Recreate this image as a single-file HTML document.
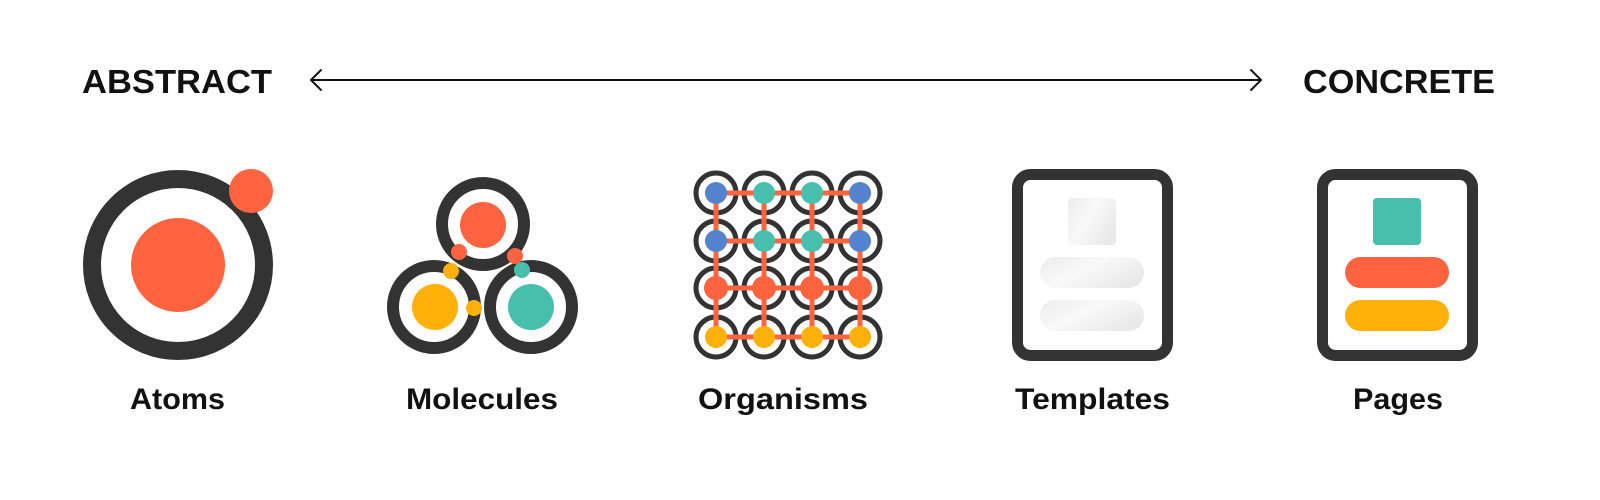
<!DOCTYPE html>
<html><head><meta charset="utf-8"><style>html,body{margin:0;padding:0;background:#fff}svg{display:block}</style></head>
<body>
<svg width="1600" height="500" viewBox="0 0 1600 500" xmlns="http://www.w3.org/2000/svg" font-family="Liberation Sans, Arial, sans-serif" font-weight="bold">
<defs>
<linearGradient id="g" x1="0" y1="0" x2="1" y2="0.6">
<stop offset="0" stop-color="#ececec"/><stop offset="0.5" stop-color="#f9f9f9"/><stop offset="1" stop-color="#e9e9e9"/>
</linearGradient>
</defs>
<text x="82" y="93" font-size="33" textLength="190" lengthAdjust="spacingAndGlyphs" fill="#111">ABSTRACT</text>
<text x="1303" y="93" font-size="33" textLength="192" lengthAdjust="spacingAndGlyphs" fill="#111">CONCRETE</text>
<g stroke="#111" stroke-width="2" fill="none" stroke-linecap="round" stroke-linejoin="round">
<line x1="311" y1="80" x2="1261" y2="80"/>
<polyline points="321,70 311,80 321,90"/>
<polyline points="1251,70 1261,80 1251,90"/>
</g>
<!-- Atoms -->
<circle cx="178" cy="265" r="86" fill="none" stroke="#333" stroke-width="18"/>
<circle cx="178" cy="265" r="47" fill="#ff6340"/>
<circle cx="251" cy="191" r="22" fill="#ff6340"/>
<!-- Molecules -->
<g fill="none" stroke="#333" stroke-width="12">
<circle cx="483" cy="224" r="41"/>
<circle cx="434" cy="307" r="41"/>
<circle cx="531" cy="307" r="41"/>
</g>
<circle cx="483" cy="225" r="23" fill="#ff6340"/>
<circle cx="435" cy="307" r="23" fill="#ffb10a"/>
<circle cx="531" cy="307" r="23" fill="#48bfad"/>
<circle cx="459" cy="252" r="8" fill="#ff6340"/>
<circle cx="451" cy="271" r="8" fill="#ffb10a"/>
<circle cx="515" cy="256" r="8" fill="#ff6340"/>
<circle cx="522" cy="270" r="8" fill="#48bfad"/>
<circle cx="474" cy="308" r="8" fill="#ffb10a"/>
<!-- Organisms -->
<g fill="none" stroke="#333" stroke-width="5">
<circle cx="716" cy="193" r="20"/><circle cx="764" cy="193" r="20"/><circle cx="812" cy="193" r="20"/><circle cx="860" cy="193" r="20"/>
<circle cx="716" cy="241" r="20"/><circle cx="764" cy="241" r="20"/><circle cx="812" cy="241" r="20"/><circle cx="860" cy="241" r="20"/>
<circle cx="716" cy="288" r="20"/><circle cx="764" cy="288" r="20"/><circle cx="812" cy="288" r="20"/><circle cx="860" cy="288" r="20"/>
<circle cx="716" cy="337" r="20"/><circle cx="764" cy="337" r="20"/><circle cx="812" cy="337" r="20"/><circle cx="860" cy="337" r="20"/>
</g>
<g stroke="#ff6340" stroke-width="5">
<line x1="716" y1="193" x2="860" y2="193"/><line x1="716" y1="241" x2="860" y2="241"/>
<line x1="716" y1="288" x2="860" y2="288"/><line x1="716" y1="337" x2="860" y2="337"/>
<line x1="716" y1="193" x2="716" y2="337"/><line x1="764" y1="193" x2="764" y2="337"/>
<line x1="812" y1="193" x2="812" y2="337"/><line x1="860" y1="193" x2="860" y2="337"/>
</g>
<g fill="#5283cc"><circle cx="716" cy="193" r="11"/><circle cx="860" cy="193" r="11"/><circle cx="716" cy="241" r="11"/><circle cx="860" cy="241" r="11"/></g>
<g fill="#48bfad"><circle cx="764" cy="193" r="11"/><circle cx="812" cy="193" r="11"/><circle cx="764" cy="241" r="11"/><circle cx="812" cy="241" r="11"/></g>
<g fill="#ff6340"><circle cx="716" cy="288" r="12"/><circle cx="764" cy="288" r="12"/><circle cx="812" cy="288" r="12"/><circle cx="860" cy="288" r="12"/></g>
<g fill="#ffb10a"><circle cx="716" cy="337" r="11"/><circle cx="764" cy="337" r="11"/><circle cx="812" cy="337" r="11"/><circle cx="860" cy="337" r="11"/></g>
<!-- Templates -->
<rect x="1017.5" y="174.5" width="150" height="181" rx="13" fill="none" stroke="#333" stroke-width="11"/>
<rect x="1068" y="198" width="48" height="47" rx="4" fill="url(#g)"/>
<rect x="1040" y="257" width="104" height="31" rx="15.5" fill="url(#g)"/>
<rect x="1040" y="300" width="104" height="31" rx="15.5" fill="url(#g)"/>
<!-- Pages -->
<rect x="1322.5" y="174.5" width="150" height="181" rx="13" fill="none" stroke="#333" stroke-width="11"/>
<rect x="1373" y="198" width="48" height="47" rx="4" fill="#48bfad"/>
<rect x="1345" y="257" width="104" height="31" rx="15.5" fill="#ff6340"/>
<rect x="1345" y="300" width="104" height="31" rx="15.5" fill="#ffb10a"/>
<!-- Labels -->
<g font-size="30" fill="#111">
<text x="130" y="409" textLength="95" lengthAdjust="spacingAndGlyphs">Atoms</text>
<text x="406" y="409" textLength="152" lengthAdjust="spacingAndGlyphs">Molecules</text>
<text x="698" y="409" textLength="170" lengthAdjust="spacingAndGlyphs">Organisms</text>
<text x="1015" y="409" textLength="155" lengthAdjust="spacingAndGlyphs">Templates</text>
<text x="1353" y="409" textLength="90" lengthAdjust="spacingAndGlyphs">Pages</text>
</g>
</svg>
</body></html>
